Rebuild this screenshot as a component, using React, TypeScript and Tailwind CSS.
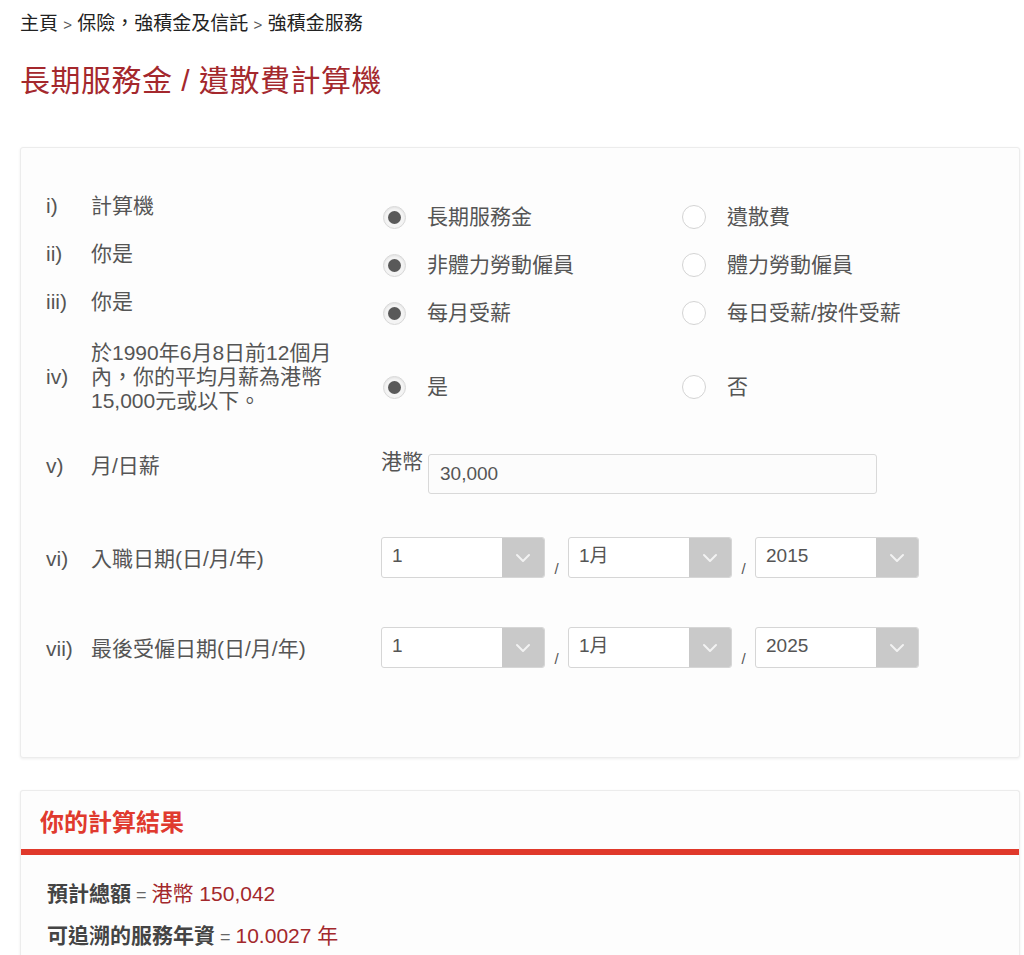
import React from "react";

const FONT = '"Liberation Sans", "Noto Sans CJK TC", sans-serif';

function Radio({ checked }: { checked: boolean }) {
  return checked ? (
    <span className="flex h-[23px] w-[23px] shrink-0 items-center justify-center rounded-full border border-[#d8d8d8] bg-[#f4f4f4] shadow-[inset_0_1px_2px_rgba(0,0,0,0.08)]">
      <span className="h-[13px] w-[13px] rounded-full bg-[#595959]" />
    </span>
  ) : (
    <span className="h-[24px] w-[24px] shrink-0 rounded-full border-[1.5px] border-[#d4d4d4] bg-white" />
  );
}

function RadioPair({ a, b, pt }: { a: string; b: string; pt: string }) {
  return (
    <div className={`flex ${pt}`}>
      <div className="flex w-[300px] items-center gap-[21px] pl-[2px]">
        <Radio checked />
        <span className="leading-[24px]">{a}</span>
      </div>
      <div className="flex items-center gap-[21px] pl-[1px]">
        <Radio checked={false} />
        <span className="leading-[24px]">{b}</span>
      </div>
    </div>
  );
}

function Label({ n, children }: { n: string; children: React.ReactNode }) {
  return (
    <div className="flex w-[335px] shrink-0 items-center leading-[24px]">
      <span className="w-[45px] shrink-0">{n}</span>
      <span className="w-[250px]">{children}</span>
    </div>
  );
}

function Chevron() {
  return (
    <svg width="16" height="10" viewBox="0 0 16 10" fill="none">
      <path d="M2 2 L8 8 L14 2" stroke="#f2f2f2" strokeWidth="2" strokeLinecap="round" strokeLinejoin="round" />
    </svg>
  );
}

function Select({ value }: { value: string }) {
  return (
    <div className="flex h-[41px] w-[164px] overflow-hidden rounded-[3px] border border-[#d6d6d6] bg-white">
      <div className="flex-1 pl-[10px] pt-[7px] text-[19px] leading-[22px] text-[#555]">{value}</div>
      <div className="flex w-[42px] items-center justify-center bg-[#c9c9c9]">
        <Chevron />
      </div>
    </div>
  );
}

function Slash() {
  return <span className="flex w-[23px] items-end justify-center self-end text-[15px] leading-[18px] text-[#555]">/</span>;
}

function DateRow({ d, m, y }: { d: string; m: string; y: string }) {
  return (
    <div className="flex">
      <Select value={d} />
      <Slash />
      <Select value={m} />
      <Slash />
      <Select value={y} />
    </div>
  );
}

export default function App() {
  return (
    <div className="min-h-[955px] bg-white text-[#555]" style={{ fontFamily: FONT }}>
      <div className="px-[20px] pt-[10px] text-[19px] leading-[28px] text-[#222]">
        主頁 <span className="text-[15px] text-[#555]">&gt;</span> 保險，強積金及信託{" "}
        <span className="text-[15px] text-[#555]">&gt;</span> 強積金服務
      </div>
      <h1 className="px-[20px] pt-[24px] text-[30px] font-normal leading-[36px] tracking-[0.5px] text-[#a4282d]">
        長期服務金 / 遺散費計算機
      </h1>

      <div className="ml-[20px] mt-[48px] w-[1000px] rounded-[3px] border border-[#ececec] bg-[#fdfdfd] pb-[89px] pl-[25px] pt-[46px] text-[21px] shadow-[0_1px_3px_rgba(0,0,0,0.07)]">
        <div className="flex h-[48px] items-start">
          <Label n="i)">計算機</Label>
          <RadioPair a="長期服務金" b="遺散費" pt="pt-[11px]" />
        </div>
        <div className="flex h-[48px] items-start">
          <Label n="ii)">你是</Label>
          <RadioPair a="非體力勞動僱員" b="體力勞動僱員" pt="pt-[11px]" />
        </div>
        <div className="flex h-[51px] items-start">
          <Label n="iii)">你是</Label>
          <RadioPair a="每月受薪" b="每日受薪/按件受薪" pt="pt-[11px]" />
        </div>
        <div className="flex items-center">
          <Label n="iv)">
            於1990年6月8日前12個月
            <br />
            內，你的平均月薪為港幣
            <br />
            15,000元或以下。
          </Label>
          <RadioPair a="是" b="否" pt="pt-[20px]" />
        </div>

        <div className="mt-[41px] flex items-start">
          <Label n="v)">月/日薪</Label>
          <div className="flex items-start">
            <span className="-mt-[4px] w-[47px] leading-[24px]">港幣</span>
            <div className="flex h-[40px] w-[449px] items-center rounded-[3px] border border-[#d9d9d9] bg-[#fcfcfc] pl-[11px] text-[19px] text-[#555]">
              30,000
            </div>
          </div>
        </div>

        <div className="mt-[43px] flex items-center">
          <div className="pt-[3px]">
            <Label n="vi)">入職日期(日/月/年)</Label>
          </div>
          <DateRow d="1" m="1月" y="2015" />
        </div>

        <div className="mt-[49px] flex items-center">
          <div className="pt-[3px]">
            <Label n="vii)">最後受僱日期(日/月/年)</Label>
          </div>
          <DateRow d="1" m="1月" y="2025" />
        </div>
      </div>

      <div className="ml-[20px] mt-[32px] w-[1000px] rounded-t-[3px] border border-b-0 border-[#ececec] bg-[#fdfdfd] shadow-[0_1px_3px_rgba(0,0,0,0.07)]">
        <div className="px-[19px] pb-[11px] pt-[17px] text-[24px] font-bold leading-[30px] text-[#e03a2e]">
          你的計算結果
        </div>
        <div className="h-[6px] bg-[#e0392b]" />
        <div className="px-[26px] pb-[40px] pt-[26px] text-[21px] leading-[26px]">
          <div>
            <span className="font-bold text-[#444]">預計總額</span>
            <span className="text-[18px] text-[#666]"> = </span>
            <span className="text-[#a3282c]">港幣 150,042</span>
          </div>
          <div className="mt-[15px]">
            <span className="font-bold text-[#444]">可追溯的服務年資</span>
            <span className="text-[18px] text-[#666]"> = </span>
            <span className="text-[#a3282c]">10.0027 年</span>
          </div>
        </div>
      </div>
    </div>
  );
}
